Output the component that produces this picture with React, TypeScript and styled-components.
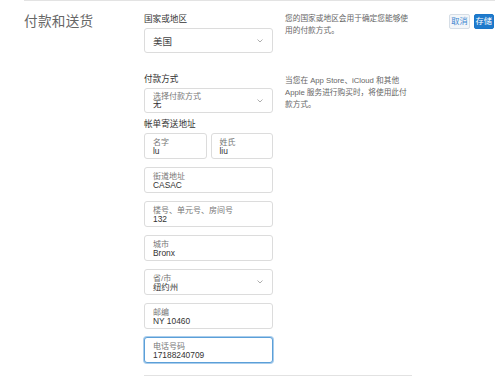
import styled, { createGlobalStyle } from 'styled-components'

const GlobalStyle = createGlobalStyle`
  body {
    margin: 0;
    background: #fff;
    font-family: "Liberation Sans", "Noto Sans CJK SC", sans-serif;
  }
`

const Page = styled.div`
  margin: 0 5px 0 24px;
  border-top: 1px solid #e3e3e3;
  display: grid;
  grid-template-columns: 120px 129px 142px 1fr;
  align-items: start;
`

const Title = styled.h1`
  margin: 12px 0 0;
  font-size: 13.6px;
  font-weight: 400;
  color: #666;
  line-height: 18px;
  letter-spacing: 0.3px;
`

const FormColumn = styled.div`
  display: flex;
  flex-direction: column;
  padding-top: 13px;
`

const SectionLabel = styled.div<{ gap?: number }>`
  font-size: 8.6px;
  line-height: 11px;
  color: #333;
  margin-top: ${(p) => p.gap ?? 0}px;
  margin-bottom: 3px;
`

const Box = styled.div<{ focused?: boolean }>`
  position: relative;
  box-sizing: border-box;
  height: 26px;
  border: 1px solid ${(p) => (p.focused ? '#5b9fd8' : '#dcdcdc')};
  box-shadow: ${(p) => (p.focused ? '0 0 0 1px #a9cdec' : 'none')};
  border-radius: 3px;
  padding: 5px 8px 0;
  display: flex;
  flex-direction: column;
  margin-bottom: 8px;
  background: #fff;
`

const SelectBox = styled(Box)`
  height: 25px;
  justify-content: center;
  padding: 0 8px;
  margin-bottom: 0;
`

const Row = styled.div`
  display: flex;
  gap: 4px;
  & > * {
    flex: 1;
  }
`

const Hint = styled.span`
  font-size: 8px;
  line-height: 7.5px;
  color: #777;
`

const Value = styled.span`
  font-size: 8.4px;
  line-height: 8px;
  color: #333;
`

const SelectValue = styled.span`
  font-size: 9.5px;
  color: #444;
`

const Chevron = styled.svg`
  position: absolute;
  right: 9px;
  top: 50%;
  margin-top: -2px;
`

const Divider = styled.div`
  grid-column: 2 / 4;
  width: 268px;
  height: 1px;
  background: #e2e2e2;
  margin-top: 4px;
`

const InfoColumn = styled.div`
  padding: 12px 0 0 12px;
`

const Info = styled.p<{ gap?: number }>`
  margin: ${(p) => p.gap ?? 0}px 0 0;
  font-size: 7.7px;
  line-height: 12.3px;
  color: #666;
  white-space: nowrap;
`

const Actions = styled.div`
  display: flex;
  justify-content: flex-end;
  gap: 4px;
  padding: 13px 1px 0 0;
`

const Button = styled.button<{ primary?: boolean }>`
  font-family: inherit;
  font-size: 8.2px;
  line-height: 11px;
  padding: 1px 1px;
  border-radius: 2px;
  border: 1px solid ${(p) => (p.primary ? '#1a76c8' : '#d6dee6')};
  background: ${(p) => (p.primary ? '#1f7acc' : '#f3f6f9')};
  color: ${(p) => (p.primary ? '#fff' : '#3b86d0')};
  cursor: pointer;
`

const ChevronIcon = () => (
  <Chevron width="6" height="4" viewBox="0 0 6 4">
    <path d="M0.5 0.5 L3 3 L5.5 0.5" fill="none" stroke="#999" strokeWidth="0.8" />
  </Chevron>
)

const Field = ({ hint, value, focused }: { hint: string; value: string; focused?: boolean }) => (
  <Box focused={focused}>
    <Hint>{hint}</Hint>
    <Value>{value}</Value>
  </Box>
)

const App = () => {
  return (
    <>
      <GlobalStyle />
      <Page>
        <Title>付款和送货</Title>
        <FormColumn>
          <SectionLabel>国家或地区</SectionLabel>
          <SelectBox>
            <SelectValue>美国</SelectValue>
            <ChevronIcon />
          </SelectBox>

          <SectionLabel gap={21}>付款方式</SectionLabel>
          <SelectBox>
            <Hint>选择付款方式</Hint>
            <Value>无</Value>
            <ChevronIcon />
          </SelectBox>

          <SectionLabel gap={6}>帐单寄送地址</SectionLabel>
          <Row>
            <Field hint="名字" value="lu" />
            <Field hint="姓氏" value="liu" />
          </Row>
          <Field hint="街道地址" value="CASAC" />
          <Field hint="楼号、单元号、房间号" value="132" />
          <Field hint="城市" value="Bronx" />
          <Box>
            <Hint>省/市</Hint>
            <Value>纽约州</Value>
            <ChevronIcon />
          </Box>
          <Field hint="邮编" value="NY 10460" />
          <Field hint="电话号码" value="17188240709" focused />
        </FormColumn>
        <InfoColumn>
          <Info>
            您的国家或地区会用于确定您能够使
            <br />
            用的付款方式。
          </Info>
          <Info gap={37}>
            当您在 App Store、iCloud 和其他
            <br />
            Apple 服务进行购买时，将使用此付
            <br />
            款方式。
          </Info>
        </InfoColumn>
        <Actions>
          <Button>取消</Button>
          <Button primary>存储</Button>
        </Actions>
        <div />
        <Divider />
      </Page>
    </>
  )
}

export default App
